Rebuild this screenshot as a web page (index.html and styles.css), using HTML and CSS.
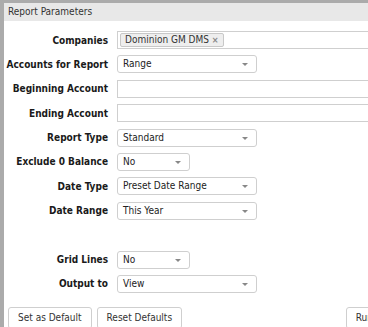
FILE: index.html
```html
<!DOCTYPE html>
<html lang="en">
<head>
<meta charset="UTF-8">
<title>Report Parameters</title>
<link rel="stylesheet" href="styles.css">
</head>
<body>
<div class="panel">
  <div class="panel-head">Report Parameters</div>
  <div class="panel-body">
    <div class="params">
      <label>Companies</label>
      <div class="multi wide">
        <span class="tag">Dominion GM DMS <span class="tag-x">&times;</span></span>
      </div>

      <label>Accounts for Report</label>
      <div class="select">Range</div>

      <label>Beginning Account</label>
      <div class="text wide"></div>

      <label>Ending Account</label>
      <div class="text wide"></div>

      <label>Report Type</label>
      <div class="select">Standard</div>

      <label>Exclude 0 Balance</label>
      <div class="select short">No</div>

      <label>Date Type</label>
      <div class="select">Preset Date Range</div>

      <label>Date Range</label>
      <div class="select">This Year</div>

      <div class="spacer"></div>

      <label>Grid Lines</label>
      <div class="select short">No</div>

      <label>Output to</label>
      <div class="select">View</div>
    </div>

    <div class="actions">
      <button>Set as Default</button>
      <button>Reset Defaults</button>
      <button class="run">Run</button>
    </div>
  </div>
</div>
</body>
</html>
```

FILE: styles.css
```css
html, body {
  margin: 0;
  height: 100%;
}
body {
  background: #ababab;
  font-family: "DejaVu Sans Condensed", "DejaVu Sans", sans-serif;
  font-size: 10px;
  color: #222;
  overflow: hidden;
}
.panel {
  margin: 3px 0 0 4px;
  background: #fff;
  height: 100%;
}
.panel-head {
  background: #e8e8e8;
  height: 18px;
  line-height: 18px;
  padding-left: 4px;
  color: #333;
}
.panel-body {
  padding-top: 10px;
}
.params {
  display: grid;
  grid-template-columns: 104px auto;
  column-gap: 9px;
  row-gap: 6.4px;
  align-items: center;
  justify-items: start;
}
.params label {
  justify-self: end;
  font-weight: bold;
  white-space: nowrap;
  color: #1a1a1a;
}
.spacer {
  grid-column: 1 / 3;
  height: 18px;
}
.select, .text, .multi {
  box-sizing: border-box;
  height: 18px;
  line-height: 16px;
  border: 1px solid #cfcfcf;
  border-radius: 3px;
  background: #fff;
}
.select {
  width: 140px;
  padding-left: 5px;
  position: relative;
}
.select::after {
  content: "";
  position: absolute;
  right: 8px;
  top: 7px;
  border-left: 3px solid transparent;
  border-right: 3px solid transparent;
  border-top: 3px solid #888;
}
.select.short {
  width: 73px;
}
.wide {
  width: 270px;
  border-radius: 0;
}
.multi {
  padding: 1px 0 0 2px;
  line-height: normal;
}
.tag {
  display: inline-block;
  box-sizing: border-box;
  height: 14px;
  line-height: 12px;
  padding: 0 4px;
  background: #eee;
  border: 1px solid #c8c8c8;
  border-radius: 2px;
  color: #333;
}
.tag-x {
  color: #888;
  font-weight: bold;
  font-size: 9px;
}
.actions {
  display: flex;
  gap: 5px;
  margin-top: 14px;
  padding-left: 4px;
}
.actions button {
  font-family: inherit;
  font-size: 10px;
  color: #333;
  background: #fff;
  border: 1px solid #cfcfcf;
  border-radius: 3px;
  height: 22px;
  padding: 0 9px;
}
.actions .run {
  margin-left: auto;
  margin-right: -15px;
}
```
